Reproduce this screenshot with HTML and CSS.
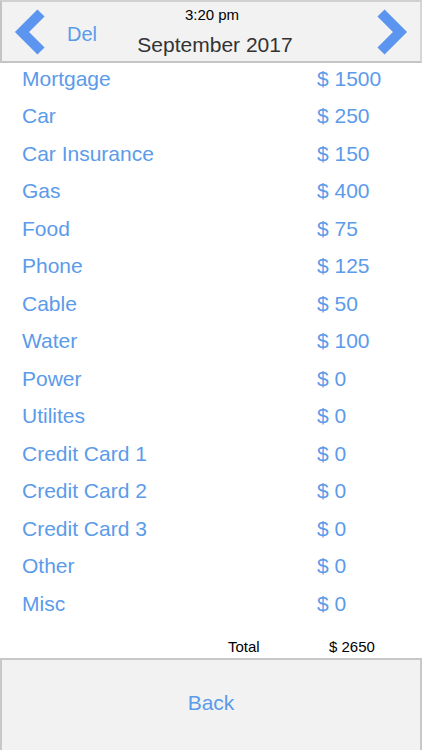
FILE: index.html
```html
<!DOCTYPE html>
<html lang="en">
<head>
<meta charset="UTF-8">
<meta name="viewport" content="width=device-width,initial-scale=1.0">
<title>Budget</title>
<link rel="stylesheet" href="styles.css">
</head>
<body>
<div class="page">
	<div class="header">
		<a class="arrow arrow-left" href="#">
			<svg width="32" height="46" viewBox="0 0 32 46"><polyline points="27,4 8,23 27,42" fill="none" stroke="#5b95f0" stroke-width="10" stroke-linejoin="miter"/></svg>
		</a>
		<a class="del" href="#">Del</a>
		<div class="title">
			<div class="time">3:20 pm</div>
			<div class="month">September 2017</div>
		</div>
		<a class="arrow arrow-right" href="#">
			<svg width="32" height="46" viewBox="0 0 32 46"><polyline points="5,4 24,23 5,42" fill="none" stroke="#5b95f0" stroke-width="10" stroke-linejoin="miter"/></svg>
		</a>
	</div>

	<div class="list">
		<div class="row"><span class="name">Mortgage</span><span class="amount">$ 1500</span></div>
		<div class="row"><span class="name">Car</span><span class="amount">$ 250</span></div>
		<div class="row"><span class="name">Car Insurance</span><span class="amount">$ 150</span></div>
		<div class="row"><span class="name">Gas</span><span class="amount">$ 400</span></div>
		<div class="row"><span class="name">Food</span><span class="amount">$ 75</span></div>
		<div class="row"><span class="name">Phone</span><span class="amount">$ 125</span></div>
		<div class="row"><span class="name">Cable</span><span class="amount">$ 50</span></div>
		<div class="row"><span class="name">Water</span><span class="amount">$ 100</span></div>
		<div class="row"><span class="name">Power</span><span class="amount">$ 0</span></div>
		<div class="row"><span class="name">Utilites</span><span class="amount">$ 0</span></div>
		<div class="row"><span class="name">Credit Card 1</span><span class="amount">$ 0</span></div>
		<div class="row"><span class="name">Credit Card 2</span><span class="amount">$ 0</span></div>
		<div class="row"><span class="name">Credit Card 3</span><span class="amount">$ 0</span></div>
		<div class="row"><span class="name">Other</span><span class="amount">$ 0</span></div>
		<div class="row"><span class="name">Misc</span><span class="amount">$ 0</span></div>
	</div>

	<div class="total">
		<span class="total-label">Total</span>
		<span class="total-value">$ 2650</span>
	</div>

	<a class="back" href="#">Back</a>
</div>
</body>
</html>
```

FILE: styles.css
```css
html,body,div,span,a { margin:0; padding:0; }
html,body { width:100%; height:100%; }
body { background:#fff; font-family:"Liberation Sans", Arial, sans-serif; }
a { text-decoration:none; }

.page { width:422px; height:750px; display:flex; flex-direction:column; overflow:hidden; }

.header { height:59px; background:#f2f2f2; border:2px solid #c4c4c4; border-right-color:#d6d6d6; border-top-color:#d0d0d0; display:flex; align-items:center; position:relative; flex:none; }
.arrow { display:flex; align-items:center; }
.arrow-left { margin-left:12px; }
.arrow-right { margin-left:auto; margin-right:12px; }
.del { color:#5b9bea; font-size:20px; margin-left:21px; margin-top:5px; }
.title { position:absolute; left:0; right:0; top:0; text-align:center; pointer-events:none; }
.time { color:#000; font-size:15px; margin-top:4px; padding-left:2px; }
.month { color:#333; font-size:21px; margin-top:10px; padding-left:8px; }

.list { margin-top:-3px; flex:none; }
.row { height:37.5px; display:grid; grid-template-columns:295px 1fr; align-items:center; padding-left:22px; color:#5b9bea; font-size:21px; }

.total { display:grid; grid-template-columns:228px 101px 1fr; font-size:15px; color:#000; padding-top:15px; height:20px; flex:none; }
.total-label { grid-column:2; }
.total-value { grid-column:3; }

.back { flex:1; background:#f2f2f2; border:2px solid #c8c8c8; border-bottom:none; display:flex; align-items:center; justify-content:center; padding-bottom:4px; color:#5b9bea; font-size:21px; }
```
